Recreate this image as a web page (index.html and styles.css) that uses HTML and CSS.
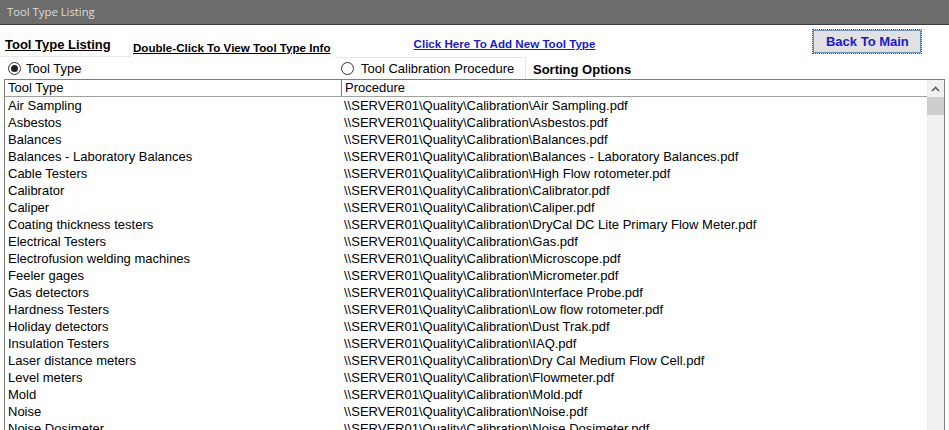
FILE: index.html
```html
<!DOCTYPE html>
<html lang="en">
<head>
    <meta charset="utf-8">
    <title>Tool Type Listing</title>
    <link rel="stylesheet" href="styles.css">
</head>
<body>
<div class="titlebar">Tool Type Listing</div>
<div class="topBar">
    <div class="heading">Tool Type Listing</div>
    <div class="hint">Double-Click To View Tool Type Info</div>
    <div class="addLink">Click Here To Add New Tool Type</div>
    <button class="backButton">Back To Main</button>
</div>
<div class="options">
    <label class="option option_first">
        <span class="radio radio_checked"></span>
        <span>Tool Type</span>
    </label>
    <label class="option option_boxed">
        <span class="radio"></span>
        <span>Tool Calibration Procedure</span>
    </label>
    <span class="sortLabel">Sorting Options</span>
</div>
<div class="grid">
    <div class="grid__main">
        <div class="grid__header">
            <div class="cell cell_type">Tool Type</div>
            <div class="cell cell_proc">Procedure</div>
        </div>
        <div class="row"><div class="cell cell_type">Air Sampling</div><div class="cell cell_proc">\\SERVER01\Quality\Calibration\Air Sampling.pdf</div></div>
        <div class="row"><div class="cell cell_type">Asbestos</div><div class="cell cell_proc">\\SERVER01\Quality\Calibration\Asbestos.pdf</div></div>
        <div class="row"><div class="cell cell_type">Balances</div><div class="cell cell_proc">\\SERVER01\Quality\Calibration\Balances.pdf</div></div>
        <div class="row"><div class="cell cell_type">Balances - Laboratory Balances</div><div class="cell cell_proc">\\SERVER01\Quality\Calibration\Balances - Laboratory Balances.pdf</div></div>
        <div class="row"><div class="cell cell_type">Cable Testers</div><div class="cell cell_proc">\\SERVER01\Quality\Calibration\High Flow rotometer.pdf</div></div>
        <div class="row"><div class="cell cell_type">Calibrator</div><div class="cell cell_proc">\\SERVER01\Quality\Calibration\Calibrator.pdf</div></div>
        <div class="row"><div class="cell cell_type">Caliper</div><div class="cell cell_proc">\\SERVER01\Quality\Calibration\Caliper.pdf</div></div>
        <div class="row"><div class="cell cell_type">Coating thickness testers</div><div class="cell cell_proc">\\SERVER01\Quality\Calibration\DryCal DC Lite Primary Flow Meter.pdf</div></div>
        <div class="row"><div class="cell cell_type">Electrical Testers</div><div class="cell cell_proc">\\SERVER01\Quality\Calibration\Gas.pdf</div></div>
        <div class="row"><div class="cell cell_type">Electrofusion welding machines</div><div class="cell cell_proc">\\SERVER01\Quality\Calibration\Microscope.pdf</div></div>
        <div class="row"><div class="cell cell_type">Feeler gages</div><div class="cell cell_proc">\\SERVER01\Quality\Calibration\Micrometer.pdf</div></div>
        <div class="row"><div class="cell cell_type">Gas detectors</div><div class="cell cell_proc">\\SERVER01\Quality\Calibration\Interface Probe.pdf</div></div>
        <div class="row"><div class="cell cell_type">Hardness Testers</div><div class="cell cell_proc">\\SERVER01\Quality\Calibration\Low flow rotometer.pdf</div></div>
        <div class="row"><div class="cell cell_type">Holiday detectors</div><div class="cell cell_proc">\\SERVER01\Quality\Calibration\Dust Trak.pdf</div></div>
        <div class="row"><div class="cell cell_type">Insulation Testers</div><div class="cell cell_proc">\\SERVER01\Quality\Calibration\IAQ.pdf</div></div>
        <div class="row"><div class="cell cell_type">Laser distance meters</div><div class="cell cell_proc">\\SERVER01\Quality\Calibration\Dry Cal Medium Flow Cell.pdf</div></div>
        <div class="row"><div class="cell cell_type">Level meters</div><div class="cell cell_proc">\\SERVER01\Quality\Calibration\Flowmeter.pdf</div></div>
        <div class="row"><div class="cell cell_type">Mold</div><div class="cell cell_proc">\\SERVER01\Quality\Calibration\Mold.pdf</div></div>
        <div class="row"><div class="cell cell_type">Noise</div><div class="cell cell_proc">\\SERVER01\Quality\Calibration\Noise.pdf</div></div>
        <div class="row"><div class="cell cell_type">Noise Dosimeter</div><div class="cell cell_proc">\\SERVER01\Quality\Calibration\Noise Dosimeter.pdf</div></div>
    </div>
    <div class="scrollbar">
        <div class="scrollbar__arrow">
            <svg width="9" height="6" viewBox="0 0 9 6"><path d="M1 5 L4.5 1.5 L8 5" fill="none" stroke="#606060" stroke-width="1.6"/></svg>
        </div>
        <div class="scrollbar__thumb"></div>
    </div>
</div>
</body>
</html>
```

FILE: styles.css
```css
body {
    margin: 0;
    padding: 0;
    width: 949px;
    height: 430px;
    overflow: hidden;
    background: #fff;
    font-family: 'Liberation Sans', Arial, sans-serif;
    color: #000;
}

.titlebar {
    height: 24px;
    line-height: 24px;
    padding-left: 7px;
    background: #6c6c6c;
    border-bottom: 1px solid #3c3c3c;
    color: #dedede;
    font-family: 'Open Sans', sans-serif;
    font-size: 11.3px;
}

.topBar {
    display: flex;
    height: 32px;
}

.heading {
    width: 126px;
    padding: 12px 0 0 5px;
    border-bottom: 1px solid #e8e8e8;
    font-size: 13px;
    font-weight: bold;
    text-decoration: underline;
}

.hint {
    margin-left: 2px;
    padding-top: 16px;
    font-size: 11.6px;
    font-weight: bold;
    text-decoration: underline;
}

.addLink {
    margin-left: 83px;
    padding-top: 12px;
    color: #1a1acc;
    font-size: 11.6px;
    font-weight: bold;
    text-decoration: underline;
}

.backButton {
    margin: 4px 0 0 217px;
    width: 110px;
    height: 25px;
    background: #e1e1e1;
    border: 1px dotted #2d5f9a;
    outline: 1px solid #6d8fb8;
    outline-offset: -2px;
    color: #1a1acc;
    font-family: 'Liberation Sans', Arial, sans-serif;
    font-size: 13px;
    font-weight: bold;
    padding: 0;
}

.options {
    display: flex;
    align-items: stretch;
    height: 22px;
    font-size: 13px;
}

.option {
    display: flex;
    align-items: center;
    gap: 5px;
}

.option_first {
    padding-left: 8px;
    width: 327px;
}

.option_boxed {
    width: 184px;
    padding-left: 6px;
    gap: 7px;
    border-top: 1px solid #e6e6e6;
    border-right: 1px solid #e6e6e6;
}

.radio {
    width: 11px;
    height: 11px;
    border: 1px solid #333;
    border-radius: 50%;
    display: flex;
    align-items: center;
    justify-content: center;
    flex-shrink: 0;
}

.radio_checked:after {
    content: '';
    width: 7px;
    height: 7px;
    border-radius: 50%;
    background: #222;
}

.sortLabel {
    display: flex;
    align-items: center;
    padding: 3px 0 0 7px;
    font-weight: bold;
}

.grid {
    display: flex;
    margin-left: 4px;
    width: 939px;
    height: 400px;
    border: 1px solid #7d7d7d;
    border-bottom: none;
}

.grid__main {
    flex-grow: 1;
    font-size: 13px;
}

.grid__header {
    display: flex;
    height: 16px;
    border-bottom: 1px solid #a0a0a0;
}

.grid__header .cell_type {
    border-right: 1px solid #7d7d7d;
}

.row {
    display: flex;
    height: 17px;
}

.cell {
    line-height: 17px;
    white-space: nowrap;
    overflow: hidden;
}

.grid__header .cell {
    line-height: 16px;
}

.cell_type {
    width: 333px;
    padding-left: 3px;
}

.cell_proc {
    flex-grow: 1;
    padding-left: 3px;
}

.scrollbar {
    width: 17px;
    background: #f0f0f0;
    display: flex;
    flex-direction: column;
}

.scrollbar__arrow {
    height: 17px;
    display: flex;
    align-items: center;
    justify-content: center;
}

.scrollbar__thumb {
    height: 18px;
    background: #cdcdcd;
}
```
